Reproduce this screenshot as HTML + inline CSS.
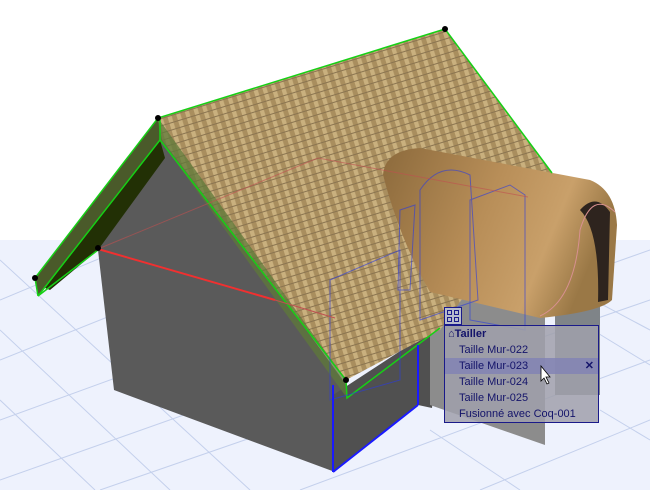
<!DOCTYPE html>
<html><head><style>
body{margin:0;width:650px;height:490px;overflow:hidden;background:#fff;font-family:"Liberation Sans",sans-serif}
#m{position:absolute;left:444px;top:325px;width:153px;height:96px;border:1px solid #1a1a8a;background:rgba(160,160,172,0.85);font-size:11px;color:#14146a}
#m div{height:16px;line-height:16px;padding-left:14px}
#ic{position:absolute;left:444px;top:307px;width:16px;height:16px;border:1px solid #1a1a8a;background:#b8bccc}
</style></head><body>
<svg width="650" height="490" style="position:absolute;left:0;top:0">
<defs>
<pattern id="t" width="9" height="7" patternUnits="userSpaceOnUse" patternTransform="rotate(-17)">
<rect width="9" height="7" fill="#b59c6c"/><rect width="4" height="6" fill="#c9b07e"/><rect x="4.5" width="4.5" height="6" fill="#a98e5e"/><rect y="6" width="9" height="1" fill="#8a7450"/></pattern>
<linearGradient id="v" x1="0" y1="0" x2="1" y2=".3"><stop offset="0" stop-color="#8c6a3c"/><stop offset=".5" stop-color="#b88e58"/><stop offset=".8" stop-color="#c9a06a"/><stop offset="1" stop-color="#9a7846"/></linearGradient>
</defs>
<polygon points="0,240 650,240 650,490 0,490" fill="#eef2fd"/>
<g stroke="#c4d0ec" stroke-width="1">
<line x1="0" y1="300" x2="120" y2="250"/><line x1="0" y1="360" x2="200" y2="280"/><line x1="0" y1="420" x2="330" y2="300"/><line x1="0" y1="480" x2="650" y2="250"/><line x1="100" y1="490" x2="650" y2="300"/><line x1="300" y1="490" x2="650" y2="360"/><line x1="480" y1="490" x2="650" y2="420"/>
<line x1="0" y1="260" x2="250" y2="490"/><line x1="0" y1="330" x2="170" y2="490"/><line x1="0" y1="400" x2="95" y2="490"/><line x1="500" y1="250" x2="650" y2="330"/><line x1="430" y1="430" x2="520" y2="490"/><line x1="560" y1="310" x2="650" y2="365"/><line x1="600" y1="410" x2="650" y2="440"/>
</g>
<polygon points="98,250 158,125 350,390 347,398 335,472 114,390" fill="#5a5a5a"/>
<polygon points="333,395 440,325 432,408 418,405 333,472" fill="#505050"/>
<polygon points="400,260 440,300 440,330 400,340" fill="#3a3a3a"/>
<polygon points="430,290 545,300 545,445 430,405" fill="#8c8c8c"/>
<polygon points="555,235 600,210 600,395 555,395" fill="#7f8488"/>
<polygon points="35,278 158,118 162,140 38,296" fill="#4a5a2a"/>
<polygon points="45,288 160,140 165,158 98,250 50,290" fill="#223005"/>
<polygon points="158,118 445,29 552,173 440,330 346,380 162,140" fill="url(#t)"/>
<polygon points="158,118 346,380 347,398 160,140" fill="#5f7a3a" opacity=".75"/>
<path d="M383,175 Q385,150 420,148 L590,180 Q615,190 617,225 L612,300 Q600,312 540,318 L430,292 Q400,240 383,175 Z" fill="url(#v)"/>
<path d="M580,210 Q596,192 610,212 L608,300 L598,302 Q600,230 580,210Z" fill="#2e241e"/>
<path d="M540,316 Q575,300 580,230 Q592,190 615,212" fill="none" stroke="#d89090" stroke-width="1"/>
<g stroke="#16d016" stroke-width="1.5" fill="none">
<polyline points="35,278 158,118 445,29 552,173"/><polyline points="38,296 160,140 346,380 347,398 440,328"/>
<line x1="35" y1="278" x2="38" y2="296"/><line x1="160" y1="140" x2="160" y2="118"/><line x1="38" y1="296" x2="98" y2="250"/>
</g>
<g stroke="#2a3ae0" stroke-width="1" fill="none" opacity=".6"><path d="M330,280 L400,250 L400,380 L330,400Z M420,190 Q440,160 470,175 L478,300 L420,320Z M470,200 L510,185 L525,195 L525,330 L470,320Z M400,210 L415,205 L410,290 L398,290Z"/></g>
<line x1="333" y1="385" x2="333" y2="472" stroke="#1a1aff" stroke-width="2"/><line x1="333" y1="472" x2="418" y2="405" stroke="#1a1aff" stroke-width="2"/><line x1="418" y1="405" x2="418" y2="345" stroke="#1a1aff" stroke-width="2"/>
<line x1="98" y1="249" x2="275" y2="300" stroke="#f03030" stroke-width="2"/>
<line x1="275" y1="300" x2="335" y2="318" stroke="#c05050" stroke-width="1"/>
<line x1="98" y1="249" x2="318" y2="158" stroke="#c05050" stroke-width="1" opacity=".6"/>
<line x1="318" y1="158" x2="528" y2="197" stroke="#c05050" stroke-width="1" opacity=".6"/>
<g fill="#000"><circle cx="35" cy="278" r="3"/><circle cx="98" cy="248" r="3"/><circle cx="158" cy="118" r="3"/><circle cx="445" cy="29" r="3"/><circle cx="346" cy="380" r="3"/></g>
</svg>
<div id="ic"><svg width="16" height="16"><g fill="none" stroke="#1a1a8a"><rect x="2.5" y="2.5" width="4" height="4"/><rect x="9.5" y="2.5" width="4" height="4"/><rect x="2.5" y="9.5" width="4" height="4"/><rect x="9.5" y="9.5" width="4" height="4"/></g></svg></div>
<div id="m">
<div style="padding-left:3px;font-weight:bold">⌂Tailler</div>
<div>Taille Mur-022</div>
<div style="background:rgba(130,132,180,.85)">Taille Mur-023<span style="float:right;margin-right:4px;font-weight:bold">✕</span></div>
<div>Taille Mur-024</div>
<div>Taille Mur-025</div>
<div>Fusionné avec Coq-001</div>
</div>
<svg width="14" height="20" style="position:absolute;left:540px;top:365px"><path d="M1,1 l0,15 l3,-3 l3,6 l2,-1 l-3,-6 l4,0z" fill="#fff" stroke="#000" stroke-width=".8"/></svg>
</body></html>
